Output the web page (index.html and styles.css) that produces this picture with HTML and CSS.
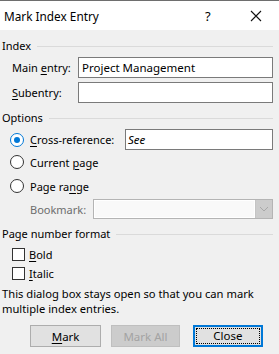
FILE: index.html
```html
<!DOCTYPE html>
<html lang="en">
<head>
    <meta charset="UTF-8">
    <title>Mark Index Entry</title>
    <link rel="stylesheet" href="styles.css">
</head>
<body>
    <div class="dialog">
        <div class="titlebar">
            <span class="title">Mark Index Entry</span>
            <span class="help">?</span>
            <svg class="close-x" width="12" height="12" viewBox="0 0 12 12">
                <path d="M1 1 L11 11 M11 1 L1 11" stroke="#111" stroke-width="1.1" fill="none"/>
            </svg>
        </div>

        <div class="content">
            <!-- Index -->
            <div class="group-title">Index</div>
            <div class="field-row">
                <label class="field-label">Main <u>e</u>ntry:</label>
                <div class="textbox">Project Management</div>
            </div>
            <div class="field-row">
                <label class="field-label"><u>S</u>ubentry:</label>
                <div class="textbox"></div>
            </div>

            <!-- Options -->
            <div class="group-title options-title">Options</div>
            <div class="radio-row first">
                <span class="radio checked"></span>
                <span class="radio-label"><u>C</u>ross-reference:</span>
                <div class="textbox see">See</div>
            </div>
            <div class="radio-row">
                <span class="radio"></span>
                <span class="radio-label">Current <u>p</u>age</span>
            </div>
            <div class="radio-row">
                <span class="radio"></span>
                <span class="radio-label">Page ra<u>n</u>ge</span>
            </div>
            <div class="bookmark-row">
                <span class="bookmark-label">Bookmark:</span>
                <div class="combo">
                    <div class="combo-text"></div>
                    <div class="combo-btn">
                        <svg width="10" height="6" viewBox="0 0 10 6">
                            <path d="M1 1 L5 5 L9 1" stroke="#a8a8a8" stroke-width="1" fill="none"/>
                        </svg>
                    </div>
                </div>
            </div>

            <!-- Page number format -->
            <div class="group-title format-title">Page number format</div>
            <div class="check-row first">
                <span class="checkbox"></span>
                <span><u>B</u>old</span>
            </div>
            <div class="check-row">
                <span class="checkbox"></span>
                <span><u>I</u>talic</span>
            </div>

            <p class="note">This dialog box stays open so that you can mark multiple index entries.</p>

            <div class="buttons">
                <button class="btn"><u>M</u>ark</button>
                <button class="btn disabled">Mark All</button>
                <button class="btn default"><span class="focus">Close</span></button>
            </div>
        </div>
    </div>
</body>
</html>
```

FILE: styles.css
```css
body {
    margin: 0;
    font-family: "Noto Sans", "Open Sans", sans-serif;
    font-size: 11px;
    color: #000;
    background: #f0f0f0;
}
.dialog {
    width: 279px;
    height: 354px;
    background: #f0f0f0;
    overflow: hidden;
}
.titlebar {
    height: 29px;
    border-top: 1px solid #6e6e6e;
    background: #fff;
    display: flex;
    align-items: center;
}
.title {
    flex: 1;
    padding-left: 4px;
    font-size: 11.8px;
    line-height: 16px;
}
.help {
    width: 12px;
    margin-right: 33px;
    font-size: 13px;
}
.close-x {
    margin-right: 17px;
}
.content {
    padding: 8px 6px 0 2px;
}
.group-title {
    display: flex;
    align-items: center;
    height: 16px;
    line-height: 16px;
}
.group-title::after {
    content: "";
    flex: 1;
    height: 1px;
    background: #dadada;
    margin-left: 6px;
}
.field-row {
    display: flex;
    align-items: center;
    margin-top: 3px;
    padding-left: 10px;
}
.field-row + .field-row {
    margin-top: 4px;
}
.field-label {
    width: 66px;
}
.textbox {
    flex: 1;
    height: 19px;
    line-height: 19px;
    border: 1px solid #7a7a7a;
    background: #fff;
    padding-left: 3px;
    font-size: 11.5px;
}
.options-title {
    margin-top: 7px;
}
.radio-row {
    display: flex;
    align-items: center;
    height: 24px;
    padding-left: 8px;
}
.radio-row.first {
    margin-top: 3px;
    height: 21px;
}
.radio {
    width: 12px;
    height: 12px;
    border: 1px solid #333;
    border-radius: 50%;
    background: #fff;
    box-sizing: content-box;
    display: flex;
    align-items: center;
    justify-content: center;
    margin-right: 6px;
}
.radio.checked {
    border-color: #0078d7;
}
.radio.checked::after {
    content: "";
    width: 6px;
    height: 6px;
    border-radius: 50%;
    background: #0078d7;
}
.radio-label {
    width: 95px;
}
.see {
    font-style: italic;
    padding-left: 2px;
}
.bookmark-row {
    display: flex;
    align-items: center;
    margin-top: 1px;
    padding-left: 28px;
}
.bookmark-label {
    width: 63px;
    color: #6d6d6d;
}
.combo {
    flex: 1;
    height: 18px;
    border: 1px solid #b4b4b4;
    display: flex;
}
.combo-text {
    flex: 1;
    background: #f9f9f9;
    border: 1px solid #fff;
}
.combo-btn {
    width: 16px;
    background: #cccccc;
    border-left: 1px solid #c4c4c4;
    display: flex;
    align-items: center;
    justify-content: center;
}
.format-title {
    margin-top: 7px;
}
.check-row {
    display: flex;
    align-items: center;
    height: 19px;
    padding-left: 10px;
}
.check-row.first {
    margin-top: 3px;
}
.checkbox {
    width: 11px;
    height: 11px;
    border: 1px solid #333;
    background: #fff;
    margin-right: 4px;
}
.note {
    margin: 3px 0 0 0;
    line-height: 15px;
    font-size: 11.2px;
}
.buttons {
    display: flex;
    padding-left: 28px;
    margin-top: 9px;
}
.btn {
    width: 74px;
    height: 22px;
    font-family: inherit;
    font-size: 11.5px;
    background: #e1e1e1;
    border: 1px solid #adadad;
    padding: 0;
    margin-right: 10px;
    color: #000;
}
.btn.disabled {
    width: 71px;
    background: #cccccc;
    border-color: #bfbfbf;
    color: #a3a3a3;
    margin-right: 13px;
}
.btn.default {
    width: 73px;
    border: 2px solid #0078d7;
    padding: 1px;
    display: flex;
}
.focus {
    flex: 1;
    border: 1px dotted #000;
    line-height: 14px;
}
u {
    text-decoration-thickness: 1px;
    text-underline-offset: 2px;
}
```
